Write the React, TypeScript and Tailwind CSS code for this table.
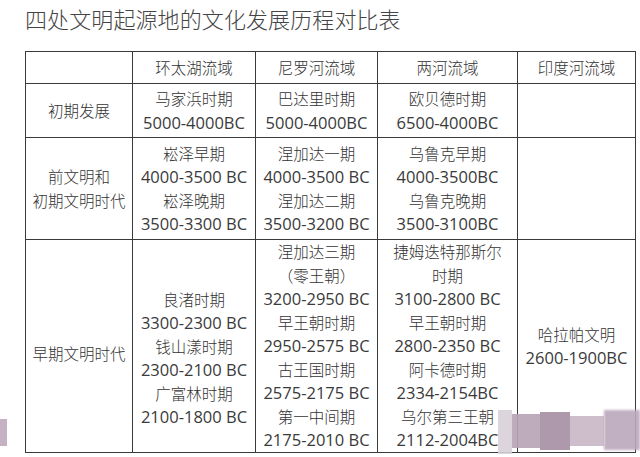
const rows: { label: string[]; cells: string[][]; h: string; pads?: string[] }[] = [
  {
    label: ["初期发展"],
    cells: [["马家浜时期", "5000-4000BC"], ["巴达里时期", "5000-4000BC"], ["欧贝德时期", "6500-4000BC"], []],
    h: "h-[54px]",
  },
  {
    label: ["前文明和", "初期文明时代"],
    cells: [
      ["崧泽早期", "4000-3500 BC", "崧泽晚期", "3500-3300 BC"],
      ["涅加达一期", "4000-3500 BC", "涅加达二期", "3500-3200 BC"],
      ["乌鲁克早期", "4000-3500BC", "乌鲁克晚期", "3500-3100BC"],
      [],
    ],
    h: "h-[102px]",
  },
  {
    label: ["早期文明时代"],
    cells: [
      ["良渚时期", "3300-2300 BC", "钱山漾时期", "2300-2100 BC", "广富林时期", "2100-1800 BC"],
      ["涅加达三期", "（零王朝）", "3200-2950 BC", "早王朝时期", "2950-2575 BC", "古王国时期", "2575-2175 BC", "第一中间期", "2175-2010 BC"],
      ["捷姆迭特那斯尔", "时期", "3100-2800 BC", "早王朝时期", "2800-2350 BC", "阿卡德时期", "2334-2154BC", "乌尔第三王朝", "2112-2004BC"],
      ["哈拉帕文明", "2600-1900BC"],
    ],
    h: "h-[213px]",
    pads: ["pt-[16px]", "pt-[24px]", "", "", ""],
  },
];

function Lines({ lines }: { lines: string[] }) {
  return (
    <>
      {lines.map((l, i) =>
        /^\d/.test(l) ? (
          <div key={i} className="text-[16.5px] leading-[23.5px] font-['Open_Sans',sans-serif] text-[#3a3a3a]">
            {l}
          </div>
        ) : (
          <div key={i} className="text-[15.5px] leading-[23.5px] font-light font-['Noto_Sans_CJK_SC',sans-serif] text-[#333]">
            {l}
          </div>
        )
      )}
    </>
  );
}

export default function App() {
  const cell = "border border-[#3a3a3a] p-0 text-center align-middle";
  return (
    <div className="relative h-[457px] w-[640px] overflow-hidden bg-white font-['Open_Sans','Noto_Sans_CJK_SC',sans-serif] text-[#363636]">
      <div className="pl-[25px] pt-[4px] text-[22px] leading-[28px] font-light text-[#444] font-['Noto_Sans_CJK_SC',sans-serif] tracking-[0.1px]">
        四处文明起源地的文化发展历程对比表
      </div>
      <table className="ml-[25px] mt-[19px] w-[610px] table-fixed border-collapse">
        <colgroup>
          <col className="w-[107px]" />
          <col className="w-[123px]" />
          <col className="w-[122px]" />
          <col className="w-[140px]" />
          <col className="w-[118px]" />
        </colgroup>
        <tbody>
          <tr className="h-[32px]">
            <td className={cell}></td>
            {["环太湖流域", "尼罗河流域", "两河流域", "印度河流域"].map((t) => (
              <td key={t} className={cell}>
                <Lines lines={[t]} />
              </td>
            ))}
          </tr>
          {rows.map((r, ri) => (
            <tr key={ri} className={r.h}>
              <td className={`${cell} ${r.pads?.[0] ?? ""}`}>
                <Lines lines={r.label} />
              </td>
              {r.cells.map((c, ci) => (
                <td key={ci} className={`${cell} ${r.pads?.[ci + 1] ?? ""}`}>
                  <Lines lines={c} />
                </td>
              ))}
            </tr>
          ))}
        </tbody>
      </table>

      {/* watermark remnants */}
      <div className="absolute left-0 top-[419px] h-[27px] w-[7px] bg-[#c4b2c2]" />
      <div className="absolute left-[498px] top-[410px] flex h-[44px] w-[142px] opacity-90">
        <div className="h-full w-[14px] bg-[#d9d0d8]" />
        <div className="mt-[4px] h-[34px] w-[28px] bg-[#b8a4b6]" />
        <div className="mt-[2px] h-[38px] w-[30px] bg-[#a58fa3]" />
        <div className="mt-[6px] h-[30px] w-[34px] bg-[#c9b8c7]" />
        <div className="h-[40px] w-[36px] bg-[#bba8bb] blur-[1px]" />
      </div>
    </div>
  );
}
